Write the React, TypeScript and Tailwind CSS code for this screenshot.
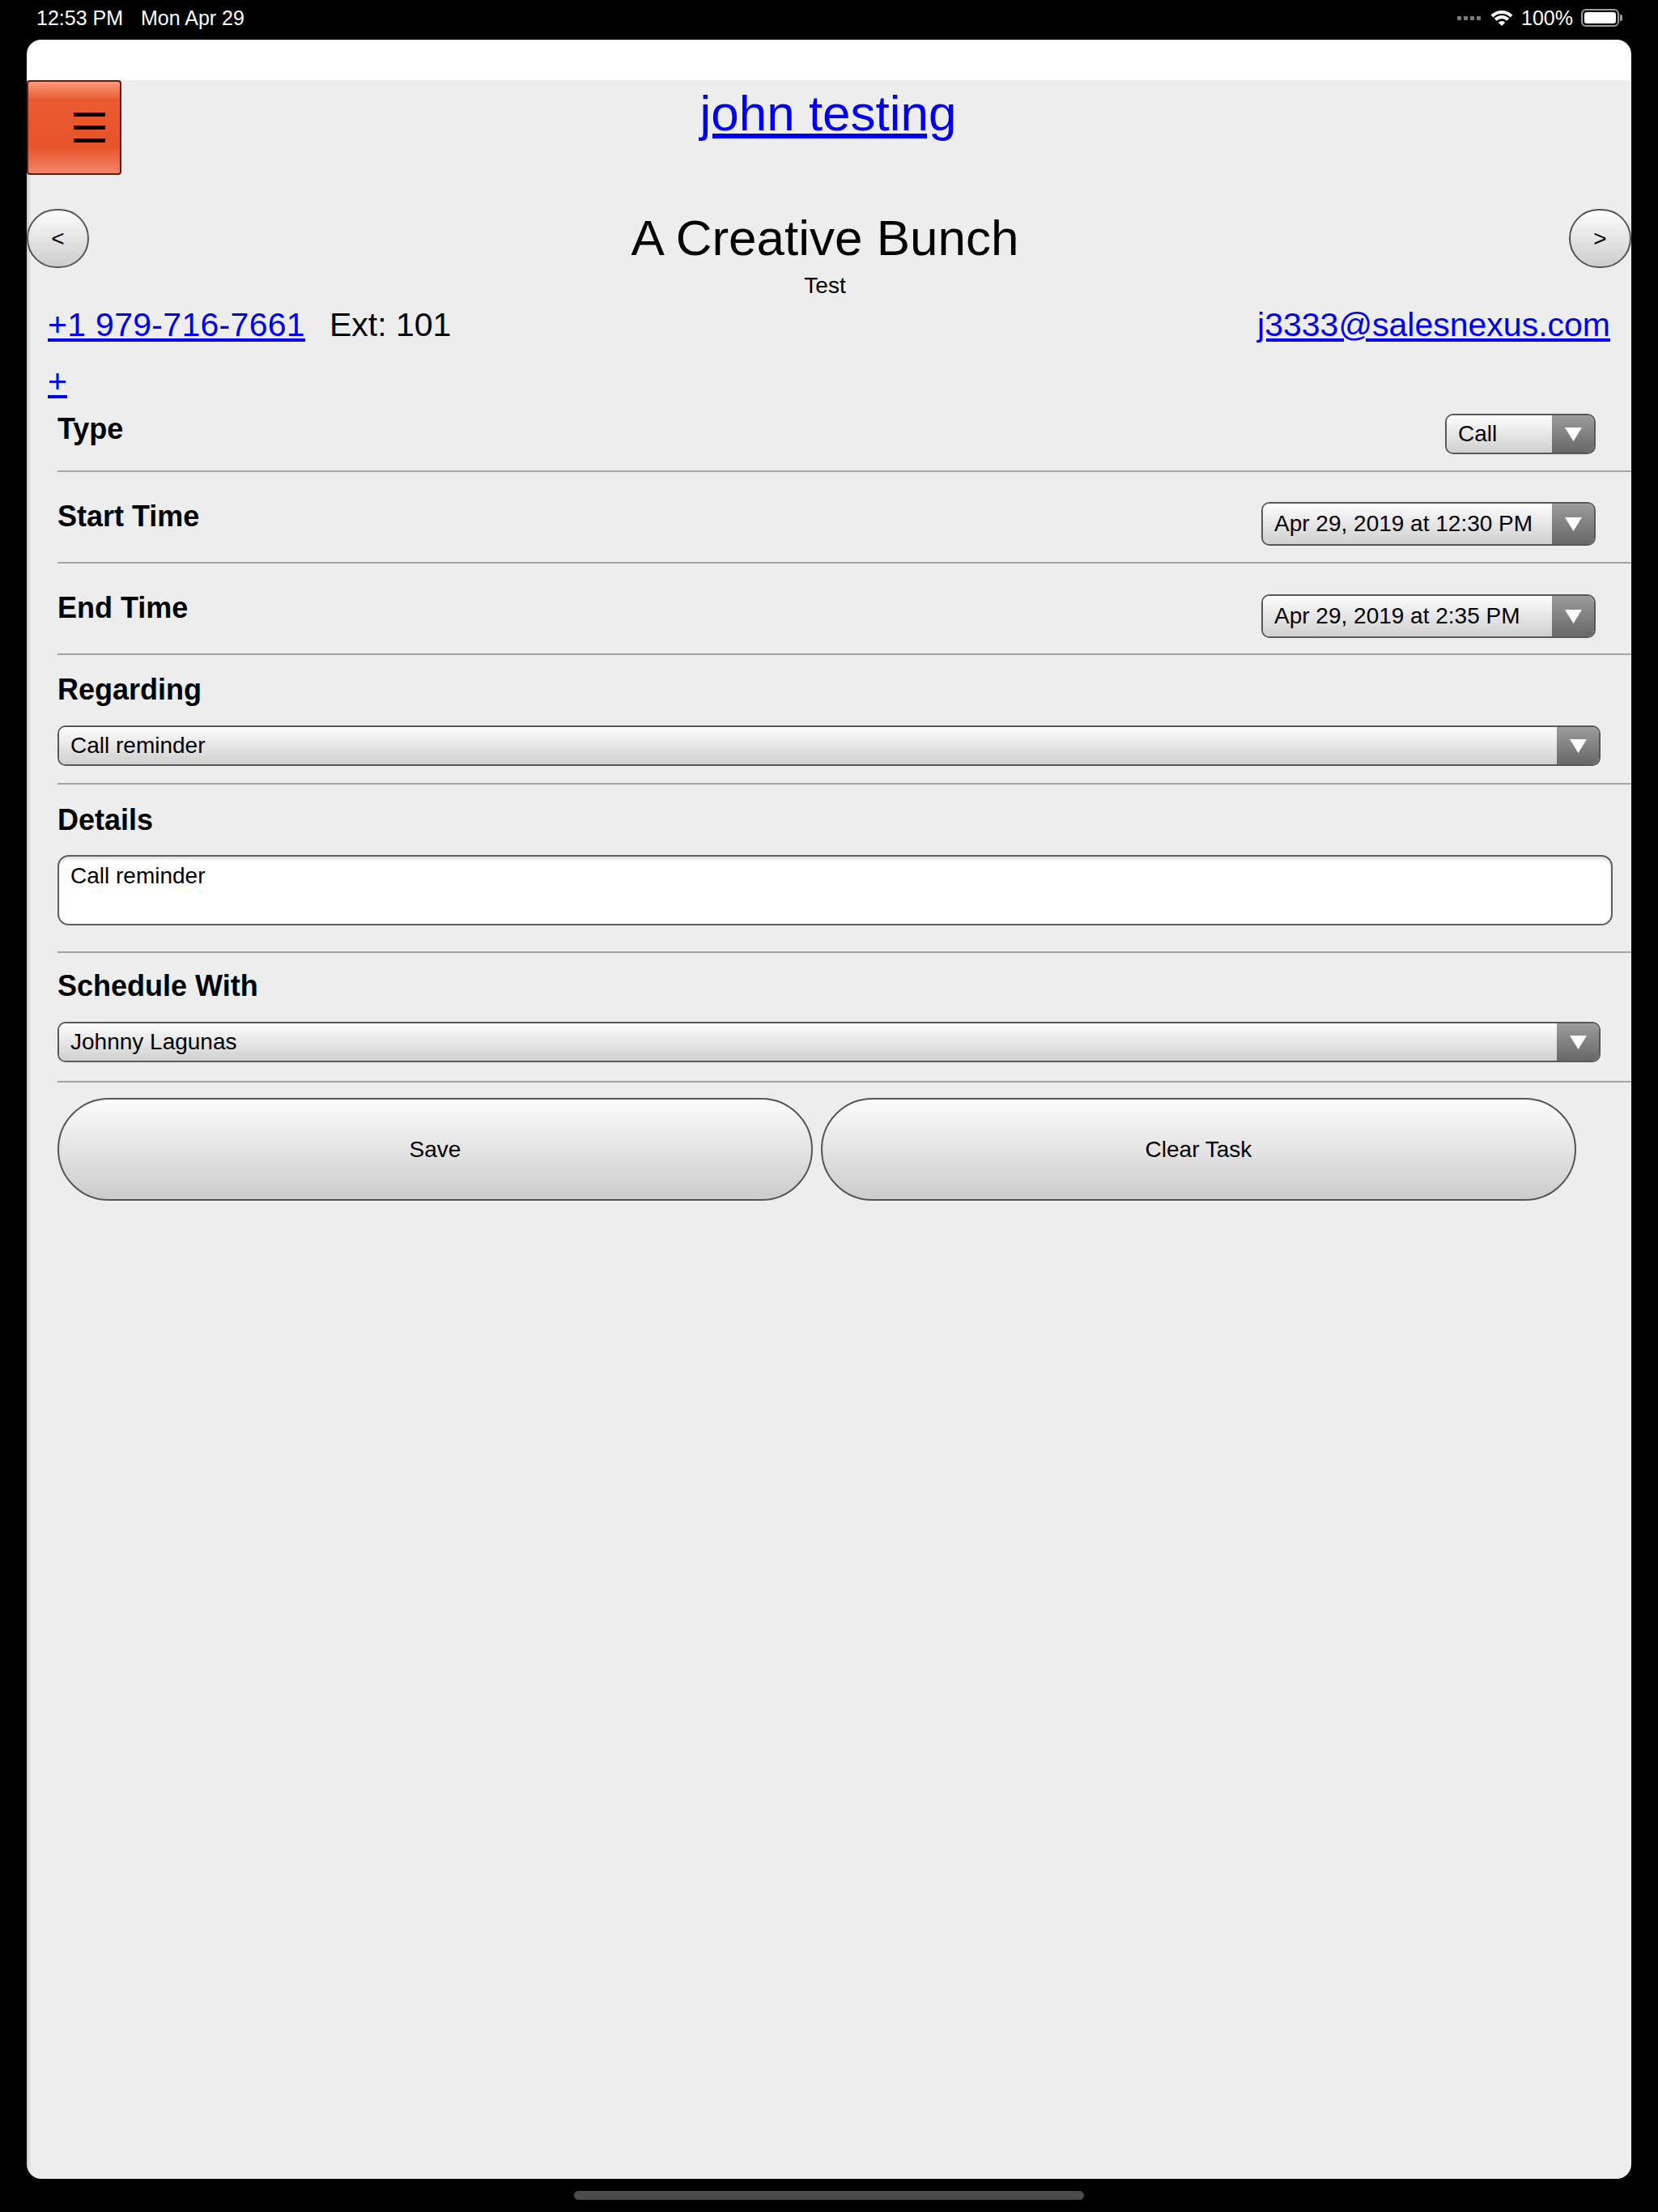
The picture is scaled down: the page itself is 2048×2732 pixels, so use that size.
import React from 'react';

// status bar glyphs
function Wifi() {
  return (
    <svg width="28" height="20" viewBox="0 0 28 20">
      <path d="M14 20 L9.76 15.76 A6 6 0 0 1 18.24 15.76 Z" fill="white" />
      <path d="M4.81 10.81 A13 13 0 0 1 23.19 10.81 L20.36 13.64 A9 9 0 0 0 7.64 13.64 Z" fill="white" />
      <path d="M0.57 6.57 A19 19 0 0 1 27.43 6.57 L24.61 9.39 A15 15 0 0 0 3.39 9.39 Z" fill="white" />
    </svg>
  );
}

function Battery() {
  return (
    <div className="flex items-center">
      <div className="w-[47px] h-[22px] rounded-[6px] border-2 border-[#9a9a9a] p-[2px]">
        <div className="w-full h-full rounded-[3px] bg-white" />
      </div>
      <div className="w-[3px] h-[8px] rounded-r-[2px] bg-[#9a9a9a] ml-[1px]" />
    </div>
  );
}

function StatusBar() {
  return (
    <div className="h-[49px] shrink-0 flex items-start justify-between pl-[45px] pr-[44px] pt-[7px] text-white text-[25px] leading-[30px]">
      <div className="flex gap-[22px]">
        <span>12:53 PM</span>
        <span>Mon Apr 29</span>
      </div>
      <div className="flex items-center gap-[10px] h-[30px]">
        <div className="flex gap-[3px] mr-[2px]">
          <div className="w-[5px] h-[5px] rounded-[1px] bg-[#7c7c7c]" />
          <div className="w-[5px] h-[5px] rounded-[1px] bg-[#7c7c7c]" />
          <div className="w-[5px] h-[5px] rounded-[1px] bg-[#7c7c7c]" />
          <div className="w-[5px] h-[5px] rounded-[1px] bg-[#7c7c7c]" />
        </div>
        <Wifi />
        <span>100%</span>
        <Battery />
      </div>
    </div>
  );
}

function Arrow() {
  return (
    <svg width="23" height="19" viewBox="0 0 23 19">
      <path d="M1 1 H22 L11.5 18 Z" fill="white" />
    </svg>
  );
}

// dropdown with the dark arrow block on the right
function Picker({ value, className }: { value: string; className: string }) {
  return (
    <div className={`flex rounded-[10px] border-2 border-[#585858] overflow-hidden ${className}`}>
      <div className="flex-1 flex items-center pl-[14px] text-[28px] text-black bg-linear-to-b from-[#fdfdfd] via-[#e6e6e6] to-[#d0d0d0] whitespace-nowrap">
        {value}
      </div>
      <div className="w-[52px] flex items-center justify-center bg-linear-to-b from-[#9c9c9c] to-[#686868]">
        <Arrow />
      </div>
    </div>
  );
}

function Label({ children }: { children: React.ReactNode }) {
  return <div className="text-[36px] leading-[40px] font-bold text-black">{children}</div>;
}

export default function App() {
  return (
    <div className="w-[2048px] h-[2732px] bg-black flex flex-col font-['Liberation_Sans',Arial,sans-serif]">
      <StatusBar />

      <div className="mx-[33px] h-[2642px] shrink-0 rounded-[18px] overflow-hidden flex flex-col">
        <div className="h-[50px] shrink-0 bg-white" />

        <main className="flex-1 bg-[#ededed] shadow-[inset_6px_0_5px_-4px_rgba(0,0,0,0.18)]">
          {/* menu button + user name */}
          <div className="grid grid-cols-[117px_1fr_117px]">
            <button className="h-[117px] rounded-[4px] border-2 border-[#6e1606] bg-[linear-gradient(to_bottom,#f99a7c_0%,#ea5a30_20%,#e8532a_72%,#f3866a_100%)] flex flex-col items-start justify-center gap-[11px] pl-[56px]">
              <div className="w-[39px] h-[5px] bg-black" />
              <div className="w-[39px] h-[5px] bg-black" />
              <div className="w-[39px] h-[5px] bg-black" />
            </button>
            <div className="text-center pt-[6px] pr-[2px]">
              <a className="text-[62px] leading-[70px] text-[#0000ee] underline">john testing</a>
            </div>
            <div />
          </div>

          {/* company navigation */}
          <div className="mt-[41px] grid grid-cols-[77px_1fr_77px] items-start">
            <button className="mt-px w-[77px] h-[73px] rounded-full border-2 border-[#555] bg-linear-to-b from-[#fcfcfc] to-[#cdcdcd] text-[28px] text-black flex items-center justify-center">
              &lt;
            </button>
            <div className="text-center text-black pr-[10px]">
              <div className="text-[62px] leading-[73px]">A Creative Bunch</div>
              <div className="mt-[6px] text-[28px] leading-[34px]">Test</div>
            </div>
            <button className="mt-px w-[77px] h-[73px] rounded-full border-2 border-[#555] bg-linear-to-b from-[#fcfcfc] to-[#cdcdcd] text-[28px] text-black flex items-center justify-center">
              &gt;
            </button>
          </div>

          {/* contact details */}
          <div className="mt-[7px] px-[26px] flex justify-between text-[41px] leading-[48px]">
            <div className="flex gap-[30px]">
              <a className="text-[#0000ee] underline tracking-[0.3px]">+1 979-716-7661</a>
              <span className="text-black">Ext: 101</span>
            </div>
            <a className="text-[#0000ee] underline">j3333@salesnexus.com</a>
          </div>
          <div className="mt-[22px] px-[26px] text-[41px] leading-[48px]">
            <a className="text-[#0000ee] underline">+</a>
          </div>

          {/* task form */}
          <div className="mt-[15px] pl-[38px]">
            <div className="flex justify-between items-start pb-[20px] border-b-2 border-[#a4a4a4]">
              <Label>Type</Label>
              <Picker value="Call" className="mt-px mr-[44px] w-[186px] h-[50px]" />
            </div>

            <div className="flex justify-between items-start pt-[35px] pb-[20px] border-b-2 border-[#a4a4a4]">
              <Label>Start Time</Label>
              <Picker value="Apr 29, 2019 at 12:30 PM" className="mt-[2px] mr-[44px] w-[413px] h-[54px]" />
            </div>

            <div className="flex justify-between items-start pt-[35px] pb-[19px] border-b-2 border-[#a4a4a4]">
              <Label>End Time</Label>
              <Picker value="Apr 29, 2019 at 2:35 PM" className="mt-[3px] mr-[44px] w-[413px] h-[54px]" />
            </div>

            <div className="pt-[23px] pb-[21px] border-b-2 border-[#a4a4a4]">
              <Label>Regarding</Label>
              <Picker value="Call reminder" className="mt-[24px] mr-[38px] h-[50px]" />
            </div>

            <div className="pt-[24px] pb-[32px] border-b-2 border-[#a4a4a4]">
              <Label>Details</Label>
              <div className="mt-[23px] mr-[23px] h-[87px] rounded-[14px] border-2 border-[#5e5e5e] bg-white shadow-[inset_0_3px_3px_rgba(0,0,0,0.12)] pl-[14px] pt-[8px] text-[28px] leading-[32px] text-black">
                Call reminder
              </div>
            </div>

            <div className="pt-[21px] pb-[23px] border-b-2 border-[#a4a4a4]">
              <Label>Schedule With</Label>
              <Picker value="Johnny Lagunas" className="mt-[24px] mr-[38px] h-[50px]" />
            </div>

            <div className="mt-[19px] flex gap-[10px]">
              <button className="w-[933px] h-[127px] rounded-full border-2 border-[#555] bg-linear-to-b from-[#fcfcfc] to-[#cccccc] text-[28px] text-black">
                Save
              </button>
              <button className="w-[933px] h-[127px] rounded-full border-2 border-[#555] bg-linear-to-b from-[#fcfcfc] to-[#cccccc] text-[28px] text-black">
                Clear Task
              </button>
            </div>
          </div>
        </main>
      </div>

      <div className="pt-[15px] flex justify-center">
        <div className="w-[630px] h-[11px] rounded-full bg-[#4b4b4b]" />
      </div>
    </div>
  );
}
